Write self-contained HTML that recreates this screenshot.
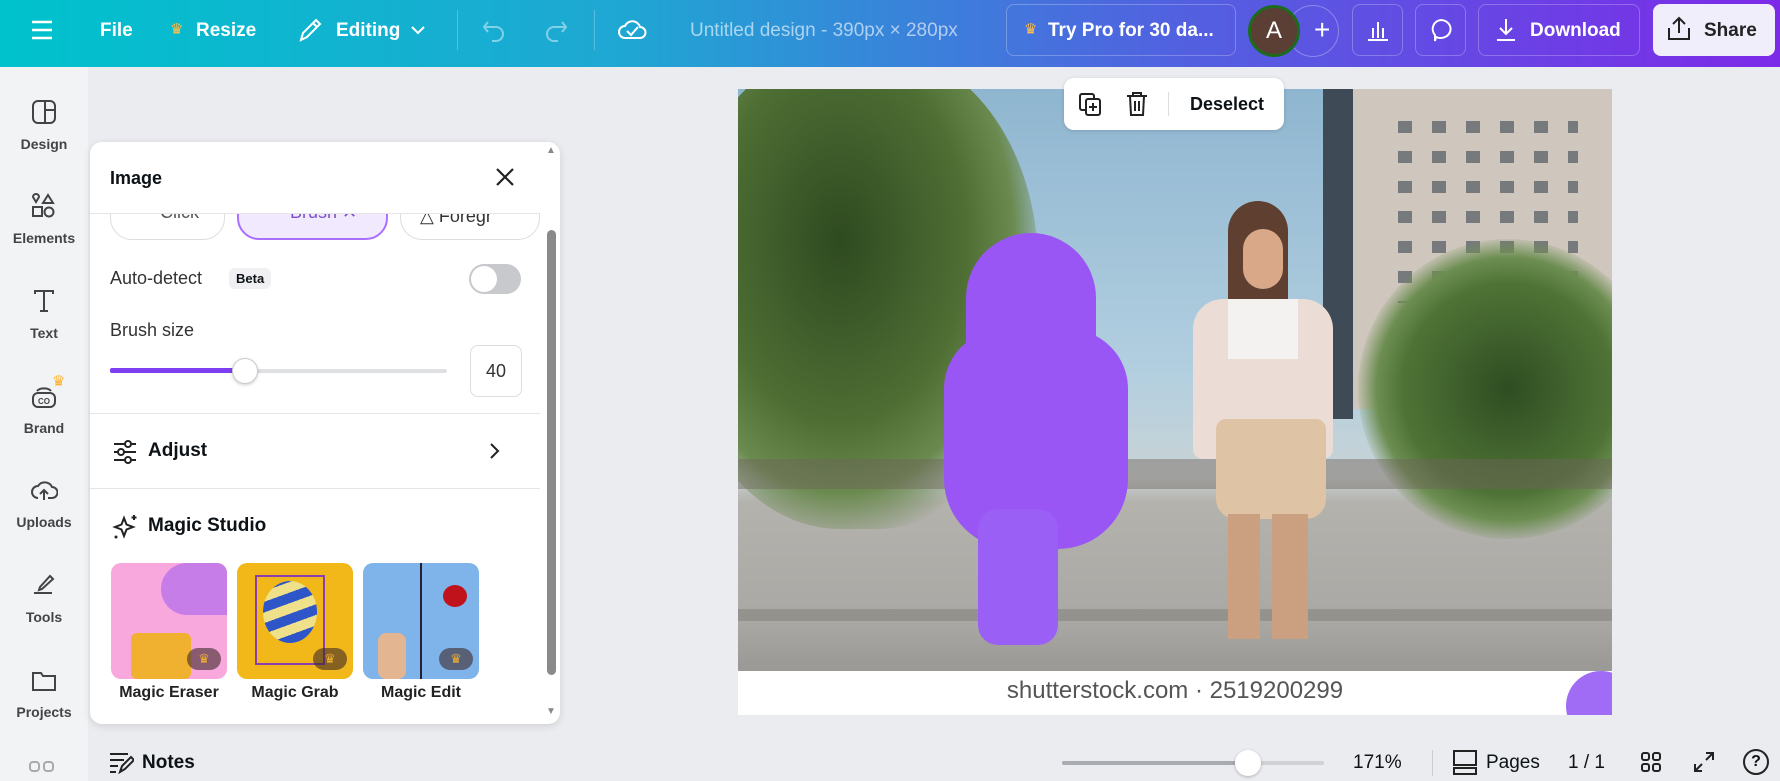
<!DOCTYPE html>
<html><head><meta charset="utf-8"><style>
*{box-sizing:border-box;margin:0;padding:0}
body{width:1780px;height:781px;overflow:hidden;background:#ebecf0;font-family:"Liberation Sans",sans-serif;position:relative;color:#0d1216}
.abs{position:absolute}
.top{left:0;top:0;width:1780px;height:67px;background:linear-gradient(90deg,#00c2cc 0%,#1fa7d3 35%,#5063e0 65%,#7d2ae8 100%)}
.tw{color:#fff;font-weight:bold;font-size:19px}
.btn{border:1px solid rgba(255,255,255,.25);border-radius:8px;height:52px;top:4px}
.side{left:0;top:67px;width:88px;height:714px;background:#f2f3f5}
.si{width:88px;text-align:center;font-size:14px;color:#444;font-weight:bold}
.si svg{display:block;margin:0 auto 10px}
.panel{left:90px;top:142px;width:470px;height:582px;background:#fff;border-radius:12px;box-shadow:0 2px 8px rgba(0,0,0,.12)}
.lbl{font-size:18px;color:#333}
.card{width:116px;height:116px;border-radius:10px;top:563px;overflow:hidden}
.cap{font-size:16px;font-weight:bold;top:684px;width:130px;text-align:center;color:#222}
.win{position:absolute;width:14px;height:12px;background:#4a5560}
</style></head><body>
<div class="abs top"></div>
<svg class="abs" style="left:30px;top:18px" width="24" height="24"><path d="M2 4h20M2 12h20M2 20h20" stroke="#fff" stroke-width="2.5"/></svg>
<div class="abs tw" style="left:100px;top:20px">File</div>
<div class="abs" style="left:170px;top:20px;color:#ffbf47;font-size:15px">♛</div>
<div class="abs tw" style="left:196px;top:20px">Resize</div>
<svg class="abs" style="left:296px;top:16px" width="28" height="28"><path d="M5 24l2-7L20 4l4 4L11 21z M17 7l4 4" stroke="#fff" stroke-width="2" fill="none"/></svg>
<div class="abs tw" style="left:336px;top:20px">Editing</div>
<svg class="abs" style="left:410px;top:24px" width="16" height="12"><path d="M2 3l6 6 6-6" stroke="#fff" stroke-width="2" fill="none"/></svg>
<div class="abs" style="left:457px;top:10px;width:1px;height:40px;background:rgba(255,255,255,.25)"></div>
<svg class="abs" style="left:482px;top:18px" width="26" height="24"><path d="M6 4L2 9l4 5M2 9h12a7 7 0 010 14h-4" stroke="rgba(255,255,255,.45)" stroke-width="2" fill="none"/></svg>
<svg class="abs" style="left:542px;top:18px" width="26" height="24"><path d="M20 4l4 5-4 5M24 9H12a7 7 0 000 14h4" stroke="rgba(255,255,255,.45)" stroke-width="2" fill="none"/></svg>
<div class="abs" style="left:594px;top:10px;width:1px;height:40px;background:rgba(255,255,255,.25)"></div>
<svg class="abs" style="left:617px;top:14px" width="30" height="30"><path d="M8 24a6 6 0 010-12 8 8 0 0115 1 5 5 0 010 11z" stroke="#fff" stroke-width="2" fill="none"/><path d="M10 17l4 4 7-8" stroke="#fff" stroke-width="2" fill="none"/></svg>
<div class="abs" style="left:690px;top:20px;color:rgba(255,255,255,.6);font-size:19px">Untitled design - 390px × 280px</div>
<div class="abs btn" style="left:1006px;width:230px"></div>
<div class="abs" style="left:1024px;top:20px;color:#ffbf47;font-size:15px">♛</div>
<div class="abs tw" style="left:1048px;top:20px">Try Pro for 30 da...</div>
<div class="abs" style="left:1287px;top:5px;width:52px;height:52px;border-radius:50%;border:1px solid rgba(255,255,255,.3)"></div>
<div class="abs" style="left:1314px;top:14px;color:#fff;font-size:28px">+</div>
<div class="abs" style="left:1248px;top:5px;width:52px;height:52px;border-radius:50%;background:#5b3f35;border:3px solid #1d6b1d;color:#fff;font-size:24px;text-align:center;line-height:46px">A</div>
<div class="abs btn" style="left:1352px;width:51px"></div>
<svg class="abs" style="left:1364px;top:16px" width="28" height="28"><path d="M4 24h20M9 22V12M14 22V6M19 22V12" stroke="#fff" stroke-width="2"/></svg>
<div class="abs btn" style="left:1415px;width:51px"></div>
<svg class="abs" style="left:1427px;top:16px" width="28" height="28"><path d="M14 4a10 9 0 11-5 17l-1 4 0-6A9 9 0 0114 4z" stroke="#fff" stroke-width="2" fill="none"/></svg>
<div class="abs btn" style="left:1478px;width:162px"></div>
<svg class="abs" style="left:1492px;top:16px" width="28" height="28"><path d="M14 3v15M8 12l6 6 6-6M5 24h18" stroke="#fff" stroke-width="2" fill="none"/></svg>
<div class="abs tw" style="left:1530px;top:20px">Download</div>
<div class="abs" style="left:1653px;top:4px;width:122px;height:52px;border-radius:8px;background:#f1eefc"></div>
<svg class="abs" style="left:1665px;top:15px" width="28" height="28"><path d="M14 18V3M8 9l6-6 6 6M4 13v11h20V13" stroke="#222" stroke-width="2" fill="none"/></svg>
<div class="abs" style="left:1704px;top:20px;font-weight:bold;font-size:19px;color:#222">Share</div>

<div class="abs side"></div>
<div class="abs si" style="left:0;top:98px"><svg width="28" height="28"><rect x="3" y="3" width="22" height="22" rx="5" stroke="#444" stroke-width="2" fill="none"/><path d="M15 3v22M15 12h10" stroke="#444" stroke-width="2"/></svg>Design</div>
<div class="abs si" style="left:0;top:192px"><svg width="28" height="28"><path d="M3 5a3 3 0 016 0l-3 5-3-5zM18 3l5 8h-10z" stroke="#444" stroke-width="2" fill="none"/><rect x="3" y="15" width="9" height="9" stroke="#444" stroke-width="2" fill="none"/><circle cx="19" cy="20" r="4.5" stroke="#444" stroke-width="2" fill="none"/></svg>Elements</div>
<div class="abs si" style="left:0;top:287px"><svg width="28" height="28"><path d="M5 7V4h18v3M14 4v20M10 24h8" stroke="#444" stroke-width="2" fill="none"/></svg>Text</div>
<div class="abs" style="left:52px;top:372px;color:#ffb02e;font-size:15px">♛</div>
<div class="abs si" style="left:0;top:382px"><svg width="28" height="28"><rect x="3" y="11" width="22" height="14" rx="5" stroke="#444" stroke-width="2" fill="none"/><path d="M7 9a8 5 0 0114 0" stroke="#444" stroke-width="2" fill="none"/><text x="14" y="22" font-size="8" text-anchor="middle" fill="#444" font-weight="bold" font-family="Liberation Sans">CO</text></svg>Brand</div>
<div class="abs si" style="left:0;top:476px"><svg width="28" height="28"><path d="M8 22a6 6 0 010-12 8 8 0 0114 1 5 5 0 010 11h-4M14 24v-9M10 18l4-4 4 4" stroke="#444" stroke-width="2" fill="none"/></svg>Uploads</div>
<div class="abs si" style="left:0;top:571px"><svg width="28" height="28"><path d="M10 16L20 5l3 3-11 10-3 1zM4 22h18" stroke="#444" stroke-width="2" fill="none"/></svg>Tools</div>
<div class="abs si" style="left:0;top:666px"><svg width="28" height="28"><path d="M3 7h8l2 3h12v14H3z" stroke="#444" stroke-width="2" fill="none"/></svg>Projects</div>
<svg class="abs" style="left:28px;top:760px" width="28" height="21"><rect x="2" y="2" width="9" height="9" rx="3" stroke="#aaa" stroke-width="2" fill="none"/><rect x="16" y="2" width="9" height="9" rx="3" stroke="#aaa" stroke-width="2" fill="none"/></svg>

<div class="abs panel"></div>
<div class="abs" style="left:110px;top:168px;font-weight:bold;font-size:18px">Image</div>
<svg class="abs" style="left:494px;top:166px" width="22" height="22"><path d="M3 3l16 16M19 3L3 19" stroke="#222" stroke-width="2.2"/></svg>
<div class="abs" style="left:90px;top:213px;width:450px;height:1px;background:#e5e5e5"></div>
<div class="abs" style="left:90px;top:214px;width:450px;height:30px;overflow:hidden">
 <div class="abs" style="left:20px;top:-30px;width:115px;height:56px;border:1px solid #ddd;border-radius:22px"></div>
 <div class="abs" style="left:70px;top:-12px;color:#555;font-size:18px">Click</div>
 <div class="abs" style="left:147px;top:-30px;width:151px;height:56px;border:2px solid #a970ff;border-radius:22px;background:#f1eafe"></div>
 <div class="abs" style="left:200px;top:-12px;color:#7d4fd0;font-size:18px">Brush ✕</div>
 <div class="abs" style="left:310px;top:-30px;width:140px;height:56px;border:1px solid #ddd;border-radius:22px"></div>
 <div class="abs" style="left:330px;top:-8px;font-size:18px;color:#333">△ Foregr</div>
</div>
<div class="abs lbl" style="left:110px;top:268px">Auto-detect</div>
<div class="abs" style="left:229px;top:268px;background:#f0f0f2;border-radius:6px;padding:3px 7px;font-size:13px;font-weight:bold">Beta</div>
<div class="abs" style="left:469px;top:264px;width:52px;height:30px;border-radius:15px;background:#c8c9cc"></div>
<div class="abs" style="left:471px;top:266px;width:26px;height:26px;border-radius:50%;background:#fff"></div>
<div class="abs lbl" style="left:110px;top:320px">Brush size</div>
<div class="abs" style="left:110px;top:369px;width:337px;height:4px;border-radius:2px;background:#dfe0e4"></div>
<div class="abs" style="left:110px;top:368px;width:136px;height:5px;border-radius:2px;background:#7d3ff0"></div>
<div class="abs" style="left:232px;top:358px;width:26px;height:26px;border-radius:50%;background:#fff;border:1px solid #ccc;box-shadow:0 1px 3px rgba(0,0,0,.2)"></div>
<div class="abs" style="left:470px;top:345px;width:52px;height:52px;border:1px solid #ddd;border-radius:8px;text-align:center;line-height:50px;font-size:18px;color:#333">40</div>
<div class="abs" style="left:90px;top:413px;width:450px;height:1px;background:#e5e5e5"></div>
<svg class="abs" style="left:112px;top:439px" width="26" height="26"><path d="M2 5h22M2 13h22M2 21h22" stroke="#222" stroke-width="2"/><circle cx="16" cy="5" r="3" fill="#fff" stroke="#222" stroke-width="2"/><circle cx="9" cy="13" r="3" fill="#fff" stroke="#222" stroke-width="2"/><circle cx="16" cy="21" r="3" fill="#fff" stroke="#222" stroke-width="2"/></svg>
<div class="abs" style="left:148px;top:440px;font-weight:bold;font-size:19px">Adjust</div>
<svg class="abs" style="left:488px;top:442px" width="14" height="18"><path d="M3 2l7 7-7 7" stroke="#222" stroke-width="2" fill="none"/></svg>
<div class="abs" style="left:90px;top:488px;width:450px;height:1px;background:#e5e5e5"></div>
<svg class="abs" style="left:112px;top:512px" width="28" height="28"><path d="M12 6l2.5 6.5L21 15l-6.5 2.5L12 24l-2.5-6.5L3 15l6.5-2.5z" stroke="#222" stroke-width="2" fill="none"/><path d="M22 3v5M19.5 5.5h5" stroke="#222" stroke-width="2"/><circle cx="4" cy="25" r="1.5" fill="#222"/></svg>
<div class="abs" style="left:148px;top:515px;font-weight:bold;font-size:19px">Magic Studio</div>
<div class="abs card" style="left:111px;background:#f9a8dd"><div class="abs" style="left:50px;top:0;width:66px;height:52px;background:#c77de8;border-radius:30px 0 0 30px"></div><div class="abs" style="left:20px;top:70px;width:60px;height:46px;background:#f0b030;border-radius:6px"></div><div class="abs" style="left:76px;top:85px;width:34px;height:22px;border-radius:11px;background:rgba(60,40,40,.6);color:#f0b030;text-align:center;font-size:13px;line-height:22px">♛</div></div>
<div class="abs card" style="left:237px;background:#f2b819"><div class="abs" style="left:18px;top:12px;width:70px;height:90px;border:2px solid #8a3fb0"></div><div class="abs" style="left:26px;top:18px;width:54px;height:62px;border-radius:50%;background:repeating-linear-gradient(160deg,#2e56c9 0 10px,#efe08a 10px 20px)"></div><div class="abs" style="left:76px;top:85px;width:34px;height:22px;border-radius:11px;background:rgba(60,40,40,.6);color:#f0b030;text-align:center;font-size:13px;line-height:22px">♛</div></div>
<div class="abs card" style="left:363px;background:#7fb4ea"><div class="abs" style="left:57px;top:0;width:2px;height:116px;background:#223"></div><div class="abs" style="left:80px;top:22px;width:24px;height:22px;border-radius:50%;background:#c0121a"></div><div class="abs" style="left:15px;top:70px;width:28px;height:46px;background:#e3b590;border-radius:8px"></div><div class="abs" style="left:76px;top:85px;width:34px;height:22px;border-radius:11px;background:rgba(60,40,40,.6);color:#f0b030;text-align:center;font-size:13px;line-height:22px">♛</div></div>
<div class="abs cap" style="left:104px">Magic Eraser</div>
<div class="abs cap" style="left:230px">Magic Grab</div>
<div class="abs cap" style="left:356px">Magic Edit</div>
<div class="abs" style="left:546px;top:145px;color:#888;font-size:10px">▲</div>
<div class="abs" style="left:546px;top:706px;color:#888;font-size:10px">▼</div>
<div class="abs" style="left:547px;top:230px;width:9px;height:445px;border-radius:5px;background:#8a8a8a"></div>

<div class="abs" style="left:738px;top:89px;width:874px;height:626px;overflow:hidden;background:linear-gradient(180deg,#8fb6d0 0%,#b2cfe0 45%,#c9d3d6 62%,#b4b2ad 66%,#aaa8a4 85%,#9c9a97 92%)">
 <div class="abs" style="left:585px;top:0;width:289px;height:320px;background:#cfc7bd"></div>
 <div class="abs" style="left:585px;top:0;width:30px;height:330px;background:#3e4a55"></div>
 <div class="abs" style="left:640px;top:14px;width:200px;height:200px;background:repeating-linear-gradient(180deg,transparent 0 18px,rgba(60,70,80,.6) 18px 30px)"></div>
 <div class="abs" style="left:640px;top:14px;width:200px;height:200px;background:repeating-linear-gradient(90deg,#cfc7bd 0 20px,transparent 20px 34px)"></div>
 <div class="abs" style="left:-60px;top:-40px;width:360px;height:480px;border-radius:45%;background:radial-gradient(ellipse at 45% 40%,#2e4a20 0%,#4e6e34 45%,#6b8a50 62%,rgba(110,140,90,0) 75%)"></div>
 <div class="abs" style="left:620px;top:150px;width:300px;height:300px;border-radius:50%;background:radial-gradient(ellipse at 50% 50%,#2f4d22 0%,#4f7336 50%,#6d8e52 62%,rgba(110,140,90,0) 72%)"></div>
 <div class="abs" style="left:0;top:370px;width:874px;height:30px;background:rgba(110,100,90,.45)"></div>
 <div class="abs" style="left:160px;top:420px;width:874px;height:2px"></div>
 <div class="abs" style="left:0;top:520px;width:874px;height:12px;background:rgba(110,105,100,.35)"></div>
 <div class="abs" style="left:228px;top:144px;width:130px;height:160px;border-radius:70px 70px 30px 30px;background:#9a55f5"></div>
 <div class="abs" style="left:206px;top:240px;width:184px;height:220px;border-radius:60px 60px 70px 70px;background:#9a55f5"></div>
 <div class="abs" style="left:240px;top:420px;width:80px;height:136px;border-radius:20px;background:#9a60f5"></div>
 <div class="abs" style="left:490px;top:112px;width:60px;height:120px;border-radius:30px 30px 20px 20px;background:#5e3f30"></div>
 <div class="abs" style="left:505px;top:140px;width:40px;height:60px;border-radius:20px;background:#d9a888"></div>
 <div class="abs" style="left:455px;top:210px;width:140px;height:160px;border-radius:30px 30px 10px 10px;background:#ecdcd6"></div>
 <div class="abs" style="left:490px;top:210px;width:70px;height:60px;background:#f4f2f0"></div>
 <div class="abs" style="left:478px;top:330px;width:110px;height:100px;border-radius:10px 10px 20px 20px;background:#dfc3a5"></div>
 <div class="abs" style="left:490px;top:425px;width:80px;height:125px;background:linear-gradient(90deg,#caa080 0 40%,transparent 40% 55%,#caa080 55%)"></div>
 <div class="abs" style="left:0;top:582px;width:874px;height:44px;background:#fff"></div>
 <div class="abs" style="left:0;top:588px;width:874px;text-align:center;font-size:24px;color:#555">shutterstock.com · 2519200299</div>
 <div class="abs" style="left:828px;top:582px;width:70px;height:70px;border-radius:50%;background:#a06cf5"></div>
</div>
<div class="abs" style="left:1064px;top:78px;width:220px;height:52px;background:#fff;border-radius:10px;box-shadow:0 1px 4px rgba(0,0,0,.15)"></div>
<svg class="abs" style="left:1078px;top:92px" width="26" height="26"><rect x="2" y="2" width="14" height="16" rx="2" stroke="#222" stroke-width="2" fill="none"/><rect x="8" y="7" width="14" height="16" rx="2" stroke="#222" stroke-width="2" fill="#fff"/><path d="M15 11v8M11 15h8" stroke="#222" stroke-width="2"/></svg>
<svg class="abs" style="left:1125px;top:91px" width="24" height="26"><path d="M2 5h20M8 5V2h8v3M5 5l1 19h12l1-19M10 10v10M14 10v10" stroke="#222" stroke-width="2" fill="none"/></svg>
<div class="abs" style="left:1168px;top:92px;width:1px;height:24px;background:#ddd"></div>
<div class="abs" style="left:1190px;top:94px;font-weight:bold;font-size:18px">Deselect</div>

<svg class="abs" style="left:108px;top:750px" width="26" height="24"><path d="M2 4h18M2 10h14M2 16h8M2 22h6M12 22l2-6 9-9 3 3-9 9z" stroke="#222" stroke-width="2" fill="none"/></svg>
<div class="abs" style="left:142px;top:752px;font-size:19px;font-weight:bold">Notes</div>
<div class="abs" style="left:1062px;top:761px;width:262px;height:4px;border-radius:2px;background:#d0d2d6"></div>
<div class="abs" style="left:1062px;top:761px;width:186px;height:4px;border-radius:2px;background:#a8abb2"></div>
<div class="abs" style="left:1235px;top:750px;width:26px;height:26px;border-radius:50%;background:#fff;box-shadow:0 1px 3px rgba(0,0,0,.25)"></div>
<div class="abs" style="left:1353px;top:752px;font-size:19px">171%</div>
<div class="abs" style="left:1432px;top:750px;width:1px;height:26px;background:#ccc"></div>
<svg class="abs" style="left:1452px;top:749px" width="26" height="26"><rect x="2" y="2" width="22" height="14" stroke="#222" stroke-width="2" fill="none"/><rect x="2" y="19" width="22" height="6" stroke="#222" stroke-width="2" fill="none"/></svg>
<div class="abs" style="left:1486px;top:752px;font-size:19px">Pages</div>
<div class="abs" style="left:1568px;top:752px;font-size:19px">1 / 1</div>
<svg class="abs" style="left:1640px;top:751px" width="22" height="22"><rect x="2" y="2" width="7" height="7" rx="2" stroke="#222" stroke-width="2" fill="none"/><rect x="13" y="2" width="7" height="7" rx="2" stroke="#222" stroke-width="2" fill="none"/><rect x="2" y="13" width="7" height="7" rx="2" stroke="#222" stroke-width="2" fill="none"/><rect x="13" y="13" width="7" height="7" rx="2" stroke="#222" stroke-width="2" fill="none"/></svg>
<svg class="abs" style="left:1692px;top:750px" width="24" height="24"><path d="M14 3h7v7M21 3l-7 7M10 21H3v-7M3 21l7-7" stroke="#222" stroke-width="2" fill="none"/></svg>
<div class="abs" style="left:1743px;top:749px;width:26px;height:26px;border-radius:50%;border:2px solid #222;text-align:center;line-height:22px;font-size:16px;font-weight:bold">?</div>
</body></html>
